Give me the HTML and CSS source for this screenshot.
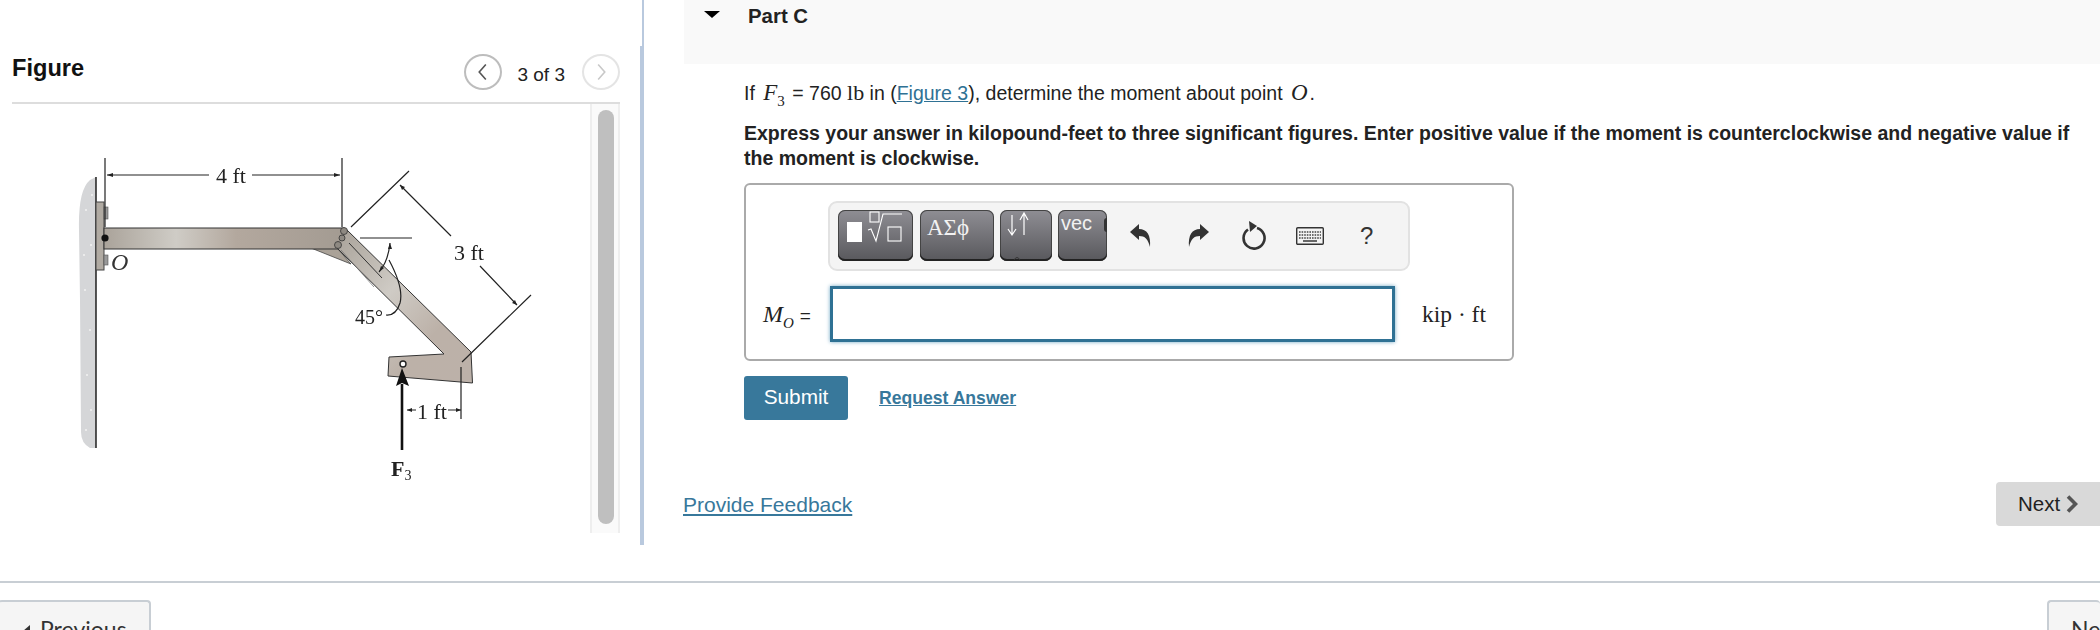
FILE: index.html
```html
<!DOCTYPE html>
<html lang="en">
<head>
<meta charset="utf-8">
<title>Part C</title>
<link rel="stylesheet" href="styles.css">
</head>
<body>
<div class="page">
  <main class="main">
    <section class="figure-panel">
      <header class="figure-head">
        <h2 class="figure-title">Figure</h2>
        <nav class="pager">
          <button class="circle"><svg viewBox="0 0 36 36" width="36" height="36"><path d="M21 10 L14 18 L21 26" class="chev"/></svg></button>
          <span class="pager-text">3 of 3</span>
          <button class="circle circle-off"><svg viewBox="0 0 36 36" width="36" height="36"><path d="M15 10 L22 18 L15 26" class="chev chev-off"/></svg></button>
        </nav>
      </header>
      <div class="figure-body">
        <div class="figure-view">
          <svg class="diagram" viewBox="12 104 578 429" width="578" height="429">
            <defs>
              <linearGradient id="beam" x1="0" x2="1" y1="0" y2="0">
                <stop offset="0" stop-color="#aaa39a"/>
                <stop offset="0.3" stop-color="#cfccc6"/>
                <stop offset="0.55" stop-color="#b3a89e"/>
                <stop offset="1" stop-color="#a39b92"/>
              </linearGradient>
              <linearGradient id="diag" x1="0" x2="1" y1="0" y2="1">
                <stop offset="0" stop-color="#a8a198"/>
                <stop offset="0.4" stop-color="#cfcbc5"/>
                <stop offset="0.7" stop-color="#bcb1a8"/>
                <stop offset="1" stop-color="#bcb1a9"/>
              </linearGradient>
            </defs>
            <path d="M96 177 L96 448 L90 448 Q81 443 81 432 L80 300 L79 230 Q78 190 90 180 Z" fill="#d5d6d8"/>
            <g fill="#f2f2f2"><circle cx="86" cy="210" r="1"/><circle cx="91" cy="245" r="1"/><circle cx="85" cy="290" r="1"/><circle cx="90" cy="330" r="1"/><circle cx="87" cy="375" r="1"/><circle cx="91" cy="410" r="1"/><circle cx="86" cy="430" r="1"/><circle cx="84" cy="255" r="1"/><circle cx="92" cy="195" r="1"/></g>
            <line x1="96" y1="177" x2="96" y2="448" stroke="#111" stroke-width="1.4"/>
            <path d="M337 248 L311 248 L351 264 Z" fill="#aaa298" stroke="#444" stroke-width="0.8"/>
            <rect x="96" y="202" width="8" height="68" fill="#b0aaa2" stroke="#444" stroke-width="1"/>
            <rect x="104" y="207" width="4" height="12" fill="#999" stroke="#555" stroke-width="0.6"/>
            <rect x="104" y="255" width="4" height="10" fill="#999" stroke="#555" stroke-width="0.6"/>
            <rect x="104" y="228" width="240" height="21" fill="url(#beam)" stroke="#333" stroke-width="1"/>
            <path d="M346 229 L471 352 L472.5 383 L388 376 L389 357 L444 354 L337 248 Z" fill="url(#diag)"/>
            <path d="M346 229 L471 352 L472.5 383 L388 376 L389 357 L444 354 L337 248" fill="none" stroke="#333" stroke-width="1"/>
            <path d="M349 243 L382 278" fill="none" stroke="#333" stroke-width="1"/>
            <path d="M341 250 L374 287" fill="none" stroke="#777" stroke-width="0.8"/>
            <g fill="#8e8982" stroke="#333" stroke-width="0.8"><circle cx="344" cy="231" r="3.5"/><circle cx="342" cy="238" r="3"/><circle cx="338" cy="245" r="3.5"/></g>
            <circle cx="105" cy="238" r="3.6" fill="#111"/>
            <g class="dim">
              <path d="M105 158 V227 M342 158 V227 M107 175 H209 M252 175 H340"/>
              <path d="M351 227 L409 171 M462 362 L531 295 M400 185 L451 236 M480 266 L517 305 M360 238 H412 M461 367 V419"/>
              <path d="M390 243 Q388 262 379 272 M389 260 Q404 288 400 303 Q396 316 386 315"/>
              <path d="M407 410 H416 M448 410 H461"/>
            </g>
            <g class="tip">
              <path d="M107 175 l6 -2 v4 Z M340 175 l-6 -2 v4 Z M400 185 l5 2 l-3 3 Z M517 305 l-5 -2 l3 -3 Z M390 243 l-2 6 l4 0 Z M379 272 l2 -6 l3 2 Z M407 410 l5 -2 v4 Z M461 410 l-5 -2 v4 Z"/>
            </g>
            <line x1="402" y1="450" x2="402" y2="384" stroke="#111" stroke-width="2.6"/>
            <path d="M402 368 L409 386 L402 383 L396 386 Z" fill="#111"/>
            <circle cx="403" cy="364" r="3" fill="#fff" stroke="#222" stroke-width="1.4"/>
            <text x="216" y="183" class="dg">4 ft</text>
            <text x="454" y="260" class="dg">3 ft</text>
            <text x="355" y="324" class="dg dg-s">45°</text>
            <text x="417" y="419" class="dg">1 ft</text>
            <text x="111" y="270" class="dg dg-o">O</text>
            <text x="391" y="476" class="dg dg-f">F<tspan class="dg-sub" dy="4">3</tspan></text>
          </svg>
        </div>
        <div class="scroll-track"><div class="scroll-thumb"></div></div>
      </div>
    </section>
    <div class="divider"><div class="divider-top"></div><div class="divider-low"></div></div>
    <section class="part">
      <header class="part-head">
        <span class="caret"></span>
        <h3 class="part-title">Part C</h3>
      </header>
      <div class="part-body">
        <p class="question">If <i class="m">F<sub>3</sub></i> = 760 <span class="r">lb</span> in (<a href="#">Figure 3</a>), determine the moment about point <i class="m">O</i>.</p>
        <p class="instructions">Express your answer in kilopound-feet to three significant figures. Enter positive value if the moment is counterclockwise and negative value if the moment is clockwise.</p>
        <div class="answer">
          <div class="toolbar">
            <button class="tb tb-1">
              <svg viewBox="0 0 75 51" width="75" height="51"><rect x="9" y="12" width="15" height="20" fill="#fff"/><g fill="none" stroke="#fff" stroke-width="1.1"><rect x="32" y="2" width="9" height="10"/><rect x="50" y="17" width="13" height="14"/><path d="M30 20 L33 19 L38 31 L45 4 H64"/></g></svg>
            </button>
            <button class="tb tb-2">ΑΣϕ</button>
            <button class="tb tb-3">
              <svg viewBox="0 0 52 51" width="52" height="51"><g fill="none" stroke="#fff" stroke-width="1.2"><path d="M12 5 V24 M8 19 L12 25 L16 19"/><path d="M24 25 V4 M20 10 L24 3 L28 10"/></g><path d="M14 50 Q17 45 20 50" fill="none" stroke="#333"/></svg>
            </button>
            <button class="tb tb-4">vec<span class="tb-notch"></span></button>
            <span class="ic"><svg viewBox="0 0 22 24" width="22" height="24"><path d="M0 8 L9 0 V5 C17 5 21 11 20 23 C18 15 15 12 9 12 V16 Z" fill="#333"/></svg></span>
            <span class="ic"><svg viewBox="0 0 22 24" width="22" height="24"><path d="M22 8 L13 0 V5 C5 5 1 11 2 23 C4 15 7 12 13 12 V16 Z" fill="#333"/></svg></span>
            <span class="ic"><svg viewBox="0 0 26 30" width="26" height="30"><path d="M16 7 A10.5 10.5 0 1 1 7 8.5" fill="none" stroke="#333" stroke-width="2.6"/><path d="M8 0 L16 5 L9 11 Z" fill="#333"/></svg></span>
            <span class="ic"><svg viewBox="0 0 28 18" width="28" height="18"><rect x="0.7" y="0.7" width="26.6" height="16.6" rx="1" fill="#f4f4f4" stroke="#333" stroke-width="1.4"/><path d="M3 5 H25 M3 8 H25 M3 11 H25" stroke="#444" stroke-width="1.6" stroke-dasharray="1.6 1"/><path d="M7 14 H21" stroke="#444" stroke-width="1.6"/></svg></span>
            <span class="ic ic-q">?</span>
          </div>
          <div class="answer-row">
            <span class="lhs"><i>M<sub>O</sub></i> <span class="eq">=</span></span>
            <input class="answer-input" type="text" aria-label="answer">
            <span class="unit">kip · ft</span>
          </div>
        </div>
        <div class="actions">
          <button class="submit">Submit</button>
          <a href="#" class="request">Request Answer</a>
        </div>
      </div>
      <div class="feedback-row">
        <a href="#" class="feedback">Provide Feedback</a>
        <button class="next">Next <svg viewBox="0 0 12 18" width="12" height="18"><path d="M2 1.5 L9.5 9 L2 16.5" fill="none" stroke="#555" stroke-width="3.6"/></svg></button>
      </div>
    </section>
  </main>
  <footer class="footer">
    <button class="foot-btn foot-prev"><span class="foot-arrow"></span>Previous</button>
    <button class="foot-btn foot-next">Next</button>
  </footer>
</div>
</body>
</html>
```
FILE: styles.css
```css
* { box-sizing: border-box; }
html, body { margin: 0; padding: 0; background: #fff; }
body { font-family: "Liberation Sans", Arial, sans-serif; color: #222; overflow: hidden; }
button { font-family: inherit; padding: 0; cursor: pointer; }
.page { width: 2100px; height: 630px; overflow: hidden; display: flex; flex-direction: column; }
.main { display: flex; height: 581px; flex: none; }

.figure-panel { width: 640px; flex: none; padding: 0 20px 0 12px; }
.figure-head { height: 104px; border-bottom: 2px solid #ddd; padding-top: 54px; display: flex; justify-content: space-between; align-items: flex-start; }
.figure-title { margin: 0; font-size: 23.6px; line-height: 28px; font-weight: 700; color: #111; }
.pager { display: flex; align-items: flex-start; margin-top: 0; }
.circle { width: 38px; height: 36px; border-radius: 50%; border: 2px solid #bdbdbd; background: #fff; display: flex; align-items: center; justify-content: center; }
.circle-off { border-color: #e4e4e4; }
.chev { fill: none; stroke: #555; stroke-width: 1.7; }
.chev-off { stroke: #c8c8c8; }
.pager-text { font-size: 19px; line-height: 24px; margin: 9px 17px 0 15px; color: #222; }
.figure-body { display: flex; height: 429px; }
.figure-view { width: 578px; flex: none; }
.diagram { display: block; filter: blur(0.35px); }
.dim { fill: none; stroke: #222; stroke-width: 1.2; }
.tip { fill: #222; }
.dg { font-family: "Liberation Serif", serif; font-size: 22px; fill: #222; }
.dg-s { font-size: 20px; }
.dg-o { font-style: italic; font-size: 24px; fill: #333; }
.dg-f { font-weight: 700; font-size: 22px; }
.dg-sub { font-size: 14px; font-weight: 400; }
.scroll-track { width: 30px; background: #fafafa; border-left: 2px solid #eee; border-right: 2px solid #eee; padding: 6px 4px 0 6px; }
.scroll-thumb { width: 16px; height: 414px; border-radius: 8px; background: #bfbfbf; }

.divider { width: 4px; flex: none; height: 545px; display: flex; flex-direction: column; align-items: flex-end; }
.divider-top { width: 2px; height: 46px; background: #b9c9de; }
.divider-low { width: 4px; flex: 1; background: #b9c9de; }

.part { flex: 1; min-width: 0; padding-left: 40px; }
.part-head { height: 64px; background: #f9f9f9; display: flex; align-items: flex-start; padding: 11px 0 0 20px; }
.caret { width: 0; height: 0; border-left: 8px solid transparent; border-right: 8px solid transparent; border-top: 7px solid #000; flex: none; }
.part-title { margin: -7px 0 0 28px; font-size: 20.4px; line-height: 24px; font-weight: 700; color: #222; }
.part-body { padding-left: 60px; }
.question { margin: 17px 0 0; font-size: 19.5px; line-height: 24px; color: #222; white-space: nowrap; }
.question a { color: #2f7194; text-decoration: underline; }
.m { font-family: "Liberation Serif", serif; font-style: italic; font-size: 23px; margin: 0 2px 0 3px; }
.m sub { font-size: 15px; font-style: normal; line-height: 0; }
.r { font-family: "Liberation Serif", serif; font-size: 22px; }
.instructions { margin: 16px 0 0; font-size: 19.5px; line-height: 25px; font-weight: 700; color: #222; width: 1340px; }

.answer { margin-top: 12px; width: 770px; height: 178px; border: 2px solid #aaa; border-radius: 6px; padding: 16px 0 0 82px; background: #fff; }
.toolbar { width: 582px; height: 70px; background: #f4f4f4; border: 2px solid #e2e2e2; border-radius: 9px; padding: 7px 0 0 8px; display: flex; align-items: flex-start; }
.tb { height: 51px; border: 0; border-radius: 7px; background: linear-gradient(#8f8e94, #58585c); box-shadow: inset 0 -2px 0 #222, inset 0 0 0 1px #444; color: #f2f2f2; display: block; position: relative; overflow: hidden; flex: none; text-align: left; }
.tb svg { display: block; }
.tb-1 { width: 75px; margin-right: 7px; }
.tb-2 { width: 74px; margin-right: 6px; font-family: "Liberation Serif", serif; font-size: 23px; line-height: 22px; padding: 7px 0 22px 7px; }
.tb-3 { width: 52px; margin-right: 6px; }
.tb-4 { width: 49px; font-size: 20px; line-height: 22px; padding: 2px 0 27px 3px; }
.tb-notch { position: absolute; right: 0; top: 8px; width: 3px; height: 14px; background: #333; border-radius: 3px 0 0 3px; }
.ic { width: 56.4px; height: 51px; flex: none; display: flex; align-items: center; justify-content: center; color: #333; font-size: 24px; }
.tb-4 + .ic { margin-left: 6px; }
.answer-row { display: flex; align-items: center; margin: 15px 0 0 -82px; height: 56px; }
.lhs { width: 84px; padding-left: 17px; font-family: "Liberation Serif", serif; font-size: 24px; white-space: nowrap; flex: none; }
.lhs sub { font-size: 15px; line-height: 0; }
.eq { font-family: "Liberation Sans", sans-serif; font-size: 19px; }
.answer-input { width: 565px; height: 56px; border: 3px solid #2f7194; background: #fff; box-shadow: 0 0 4px #6fa6c4; outline: none; flex: none; }
.unit { margin-left: 27px; font-family: "Liberation Serif", serif; font-size: 23.5px; color: #222; white-space: nowrap; }

.actions { display: flex; align-items: center; margin-top: 15px; height: 44px; }
.submit { width: 104px; height: 44px; border: 0; border-radius: 3px; background: #38789b; color: #fff; font-size: 20.8px; padding-bottom: 2px; }
.request { margin-left: 31px; font-size: 17.6px; font-weight: 700; color: #38789b; text-decoration: underline; margin-top: 1px; }

.feedback-row { display: flex; justify-content: space-between; align-items: center; margin-top: 62px; height: 44px; }
.feedback { font-size: 21px; color: #38789b; text-decoration: underline; margin: 2px 0 0 -1px; }
.next { width: 104px; height: 44px; border: 0; border-radius: 4px 0 0 4px; background: #d9d9d9; color: #222; font-size: 20.5px; display: flex; align-items: center; justify-content: center; gap: 6px; }

.footer { border-top: 2px solid #c8ced4; flex: none; height: 49px; padding-top: 17px; display: flex; justify-content: space-between; align-items: flex-start; }
.foot-btn { height: 44px; background: #f5f5f5; border: 2px solid #c8ced4; border-bottom: 0; border-radius: 4px 4px 0 0; font-family: "Lato", sans-serif; font-size: 23px; color: #333; text-align: left; padding: 12px 0 0; line-height: 28px; flex: none; }
.foot-prev { width: 153px; margin-left: -2px; padding-left: 42px; border-left: 0; position: relative; }
.foot-arrow { position: absolute; left: 25px; top: 23px; width: 0; height: 0; border-top: 6px solid transparent; border-bottom: 6px solid transparent; border-right: 7px solid #333; }
.foot-next { width: 53px; padding-left: 22px; border-right: 0; overflow: hidden; white-space: nowrap; }
```
